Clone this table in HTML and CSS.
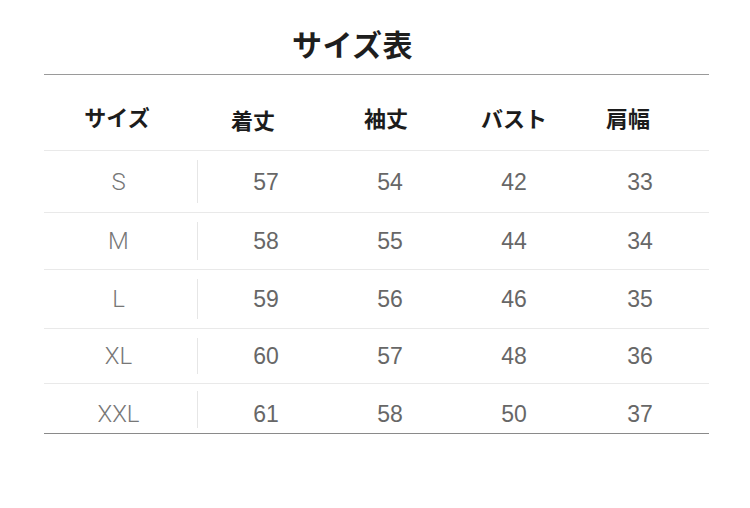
FILE: index.html
```html
<!DOCTYPE html>
<html lang="ja">
<head>
<meta charset="utf-8">
<title>サイズ表</title>
<link rel="stylesheet" href="styles.css">
</head>
<body>
<div class="sheet">
  <h1 class="title">サイズ表</h1>
  <div class="table">
    <div class="row head">
      <div class="c c1 h1c">サイズ</div>
      <div class="c c2 h2c">着丈</div>
      <div class="c c3 h3c">袖丈</div>
      <div class="c c4">バスト</div>
      <div class="c c5 h5c">肩幅</div>
    </div>
    <div class="row r1">
      <div class="c size">S</div>
      <div class="c num">57</div>
      <div class="c num">54</div>
      <div class="c num">42</div>
      <div class="c num n5">33</div>
    </div>
    <div class="row r2">
      <div class="c size">M</div>
      <div class="c num">58</div>
      <div class="c num">55</div>
      <div class="c num">44</div>
      <div class="c num n5">34</div>
    </div>
    <div class="row r3">
      <div class="c size">L</div>
      <div class="c num">59</div>
      <div class="c num">56</div>
      <div class="c num">46</div>
      <div class="c num n5">35</div>
    </div>
    <div class="row r4">
      <div class="c size">XL</div>
      <div class="c num">60</div>
      <div class="c num">57</div>
      <div class="c num">48</div>
      <div class="c num n5">36</div>
    </div>
    <div class="row r5">
      <div class="c size">XXL</div>
      <div class="c num">61</div>
      <div class="c num">58</div>
      <div class="c num">50</div>
      <div class="c num n5">37</div>
    </div>
  </div>
</div>
</body>
</html>
```
FILE: styles.css
```css
html, body {
  margin: 0;
  padding: 0;
  background: #ffffff;
}
body {
  width: 750px;
  height: 508px;
  overflow: hidden;
  font-family: "Noto Sans CJK JP", "Noto Sans", sans-serif;
}
.sheet {
  margin-left: 44px;
  width: 665px;
}
.title {
  margin: 23px 0 11px 0;
  padding-right: 48px;
  height: 40px;
  line-height: 40px;
  text-align: center;
  font-size: 30px;
  font-weight: 700;
  color: #1e1e1e;
  letter-spacing: 0.5px;
}
.table {
  border-top: 1.5px solid #9a9a9a;
  border-bottom: 1.5px solid #8a8a8a;
}
.row {
  display: grid;
  grid-template-columns: 154px 136px 112px 136px 127px;
  border-top: 1px solid #e9e9e9;
}
.row.head {
  border-top: none;
  height: 75px;
}
.c {
  display: flex;
  align-items: center;
  justify-content: center;
}
.head .c {
  font-size: 22px;
  font-weight: 700;
  color: #1c1c1c;
  padding-top: 9px;
}
.head .h1c { padding-right: 8px; padding-top: 6px; }
.head .h2c { padding-right: 26px; padding-top: 12px; }
.head .h3c { padding-right: 8px; }
.head .h5c { padding-right: 35px; }

.r1 { height: 61px; }
.r2 { height: 56px; }
.r3 { height: 58px; }
.r4 { height: 54px; }
.r5 { height: 49px; }

.size {
  margin: 9px 0;
  border-right: 1px solid #e6e6e6;
  padding-right: 4px;
  font-family: "Roboto", "Liberation Sans", sans-serif;
  font-weight: 300;
  font-size: 24px;
  color: #777777;
}
.num {
  font-family: "Liberation Sans", "Arial", sans-serif;
  font-size: 23px;
  color: #676767;
}
.n5 { padding-right: 11px; }
.r1 .c { padding-top: 2px; }
.r1 .size { padding-top: 0; }
.r5 .size { margin-top: 7px; margin-bottom: 5px; padding-top: 9px; }
.r5 .num { padding-top: 12px; }
```
